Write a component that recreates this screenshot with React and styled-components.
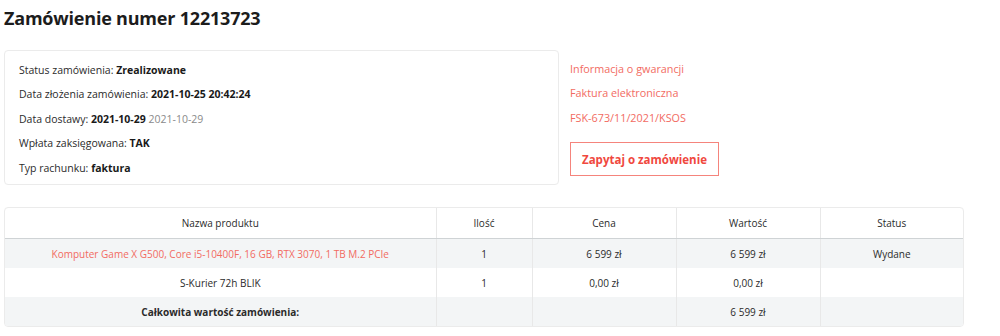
import React from "react";
import styled, { createGlobalStyle } from "styled-components";

const Global = createGlobalStyle`
  html, body { margin: 0; padding: 0; background: #fff; }
  body { font-family: "Open Sans", "Noto Sans", sans-serif; color: #222; }
`;

const Page = styled.div`
  padding: 6px 4px 0 4px;
  width: 960px;
`;

const Title = styled.h1`
  margin: 0 0 20px 0;
  font-size: 18px;
  font-weight: 700;
  line-height: 24px;
  color: #1c1c1c;
  letter-spacing: -0.2px;
`;

const Top = styled.div`
  display: flex;
  gap: 11px;
  margin-bottom: 22px;
`;

const InfoBox = styled.div`
  width: 555px;
  height: 135px;
  box-sizing: border-box;
  border: 1px solid #ebebeb;
  border-radius: 4px;
  padding: 7px 14px;
  display: flex;
  flex-direction: column;
`;

const InfoLine = styled.div`
  font-size: 10.5px;
  line-height: 24.4px;
  color: #2b2b2b;
  b { font-weight: 700; color: #1a1a1a; }
`;

const Muted = styled.span`
  color: #8a8a8a;
`;

const Side = styled.div`
  display: flex;
  flex-direction: column;
  padding-top: 7px;
`;

const SideLink = styled.a`
  font-size: 10.8px;
  line-height: 24.4px;
  color: #f26b62;
  text-decoration: none;
`;

const AskButton = styled.button`
  margin-top: 12px;
  width: 149px;
  height: 34px;
  border: 1px solid #f5847c;
  background: #fff;
  color: #f0483e;
  font-family: inherit;
  font-size: 11.5px;
  font-weight: 700;
  padding: 0;
  cursor: pointer;
`;

const TableWrap = styled.div`
  border: 1px solid #ebebeb;
  border-radius: 4px;
  overflow: hidden;
  width: 960px;
  box-sizing: border-box;
`;

const Table = styled.table`
  width: 100%;
  border-collapse: collapse;
  table-layout: fixed;
  font-size: 10px;
`;

const Th = styled.th`
  font-weight: 400;
  color: #2b2b2b;
  height: 30px;
  border-bottom: 1px solid #cfd3d5;
  border-left: 1px solid #e8e8e8;
  &:first-child { border-left: none; }
  text-align: center;
  padding: 0;
`;

const Tr = styled.tr`
  background: ${(p) => (p.$alt ? "#f3f5f6" : "#fff")};
`;

const Td = styled.td`
  height: 29px;
  padding: 0;
  text-align: center;
  color: ${(p) => (p.$red ? "#f26b62" : "#2b2b2b")};
  font-weight: ${(p) => (p.$bold ? 700 : 400)};
  border-left: 1px solid #e8e8e8;
  &:first-child { border-left: none; }
`;

const rows = [
  { name: "Komputer Game X G500, Core i5-10400F, 16 GB, RTX 3070, 1 TB M.2 PCIe", qty: "1", price: "6 599 zł", value: "6 599 zł", status: "Wydane", red: true },
  { name: "S-Kurier 72h BLIK", qty: "1", price: "0,00 zł", value: "0,00 zł", status: "" },
];

export default function App() {
  return (
    <Page>
      <Global />
      <Title>Zamówienie numer 12213723</Title>
      <Top>
        <InfoBox>
          <InfoLine>Status zamówienia: <b>Zrealizowane</b></InfoLine>
          <InfoLine>Data złożenia zamówienia: <b>2021-10-25 20:42:24</b></InfoLine>
          <InfoLine>Data dostawy: <b>2021-10-29</b> <Muted>2021-10-29</Muted></InfoLine>
          <InfoLine>Wpłata zaksięgowana: <b>TAK</b></InfoLine>
          <InfoLine>Typ rachunku: <b>faktura</b></InfoLine>
        </InfoBox>
        <Side>
          <SideLink href="#">Informacja o gwarancji</SideLink>
          <SideLink href="#">Faktura elektroniczna</SideLink>
          <SideLink href="#">FSK-673/11/2021/KSOS</SideLink>
          <AskButton>Zapytaj o zamówienie</AskButton>
        </Side>
      </Top>
      <TableWrap>
        <Table>
          <colgroup>
            <col style={{ width: 431 }} />
            <col style={{ width: 96 }} />
            <col style={{ width: 144 }} />
            <col style={{ width: 144 }} />
            <col />
          </colgroup>
          <thead>
            <tr>
              <Th>Nazwa produktu</Th>
              <Th>Ilość</Th>
              <Th>Cena</Th>
              <Th>Wartość</Th>
              <Th>Status</Th>
            </tr>
          </thead>
          <tbody>
            {rows.map((r, i) => (
              <Tr key={i} $alt={i % 2 === 0}>
                <Td $red={r.red}>{r.name}</Td>
                <Td>{r.qty}</Td>
                <Td>{r.price}</Td>
                <Td>{r.value}</Td>
                <Td>{r.status}</Td>
              </Tr>
            ))}
            <Tr $alt>
              <Td $bold>Całkowita wartość zamówienia:</Td>
              <Td />
              <Td />
              <Td>6 599 zł</Td>
              <Td />
            </Tr>
          </tbody>
        </Table>
      </TableWrap>
    </Page>
  );
}
